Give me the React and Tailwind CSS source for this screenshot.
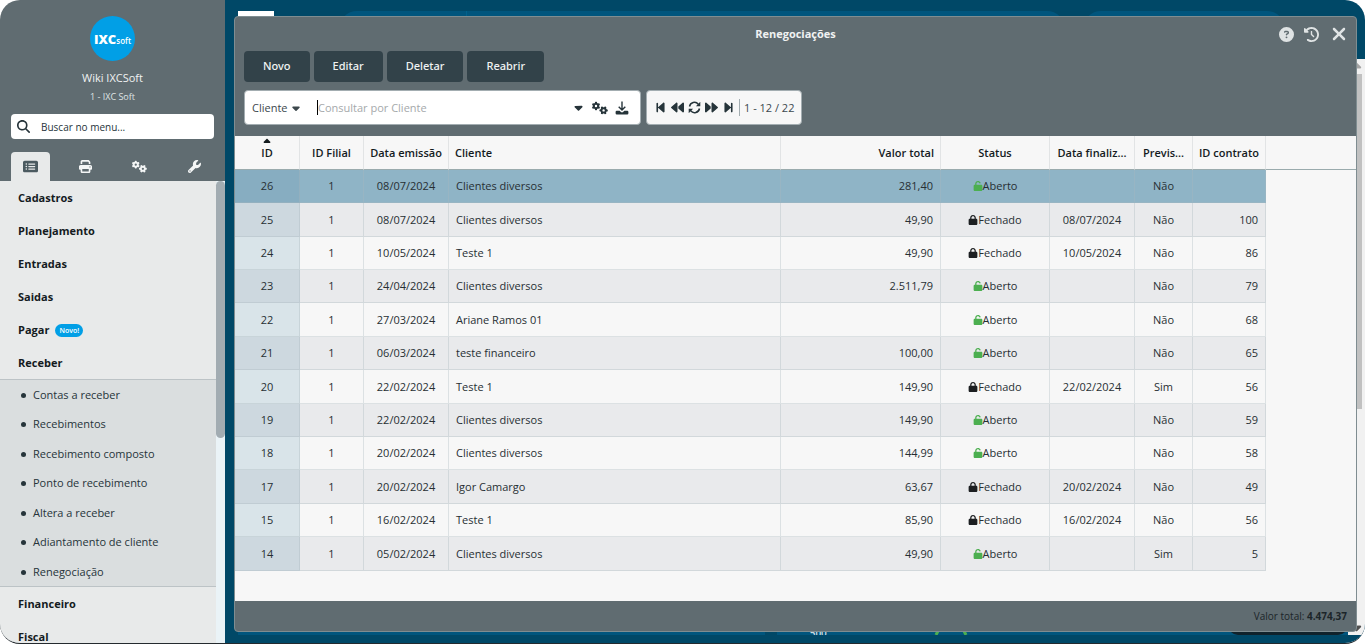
import React, { useState } from 'react';
import {
  FaMagnifyingGlass,
  FaRectangleList,
  FaPrint,
  FaGears,
  FaWrench,
  FaCaretDown,
  FaCaretUp,
  FaBackwardStep,
  FaBackward,
  FaForward,
  FaForwardStep,
  FaCircleQuestion,
  FaClockRotateLeft,
  FaXmark,
  FaLock,
  FaUnlock
} from 'react-icons/fa6';

const rows = [
  { id: 26, emissao: '08/07/2024', cliente: 'Clientes diversos', valor: '281,40', status: 'Aberto', final: '', previsao: 'Não', contrato: '' },
  { id: 25, emissao: '08/07/2024', cliente: 'Clientes diversos', valor: '49,90', status: 'Fechado', final: '08/07/2024', previsao: 'Não', contrato: '100' },
  { id: 24, emissao: '10/05/2024', cliente: 'Teste 1', valor: '49,90', status: 'Fechado', final: '10/05/2024', previsao: 'Não', contrato: '86' },
  { id: 23, emissao: '24/04/2024', cliente: 'Clientes diversos', valor: '2.511,79', status: 'Aberto', final: '', previsao: 'Não', contrato: '79' },
  { id: 22, emissao: '27/03/2024', cliente: 'Ariane Ramos 01', valor: '', status: 'Aberto', final: '', previsao: 'Não', contrato: '68' },
  { id: 21, emissao: '06/03/2024', cliente: 'teste financeiro', valor: '100,00', status: 'Aberto', final: '', previsao: 'Não', contrato: '65' },
  { id: 20, emissao: '22/02/2024', cliente: 'Teste 1', valor: '149,90', status: 'Fechado', final: '22/02/2024', previsao: 'Sim', contrato: '56' },
  { id: 19, emissao: '22/02/2024', cliente: 'Clientes diversos', valor: '149,90', status: 'Aberto', final: '', previsao: 'Não', contrato: '59' },
  { id: 18, emissao: '20/02/2024', cliente: 'Clientes diversos', valor: '144,99', status: 'Aberto', final: '', previsao: 'Não', contrato: '58' },
  { id: 17, emissao: '20/02/2024', cliente: 'Igor Camargo', valor: '63,67', status: 'Fechado', final: '20/02/2024', previsao: 'Não', contrato: '49' },
  { id: 15, emissao: '16/02/2024', cliente: 'Teste 1', valor: '85,90', status: 'Fechado', final: '16/02/2024', previsao: 'Não', contrato: '56' },
  { id: 14, emissao: '05/02/2024', cliente: 'Clientes diversos', valor: '49,90', status: 'Aberto', final: '', previsao: 'Sim', contrato: '5' }
];

const columns = [
  { key: 'id', label: 'ID', width: 'w-[65px]', align: 'text-center', sorted: true },
  { key: 'filial', label: 'ID Filial', width: 'w-[64px]', align: 'text-center' },
  { key: 'emissao', label: 'Data emissão', width: 'w-[85px]', align: 'text-center' },
  { key: 'cliente', label: 'Cliente', width: 'w-[332px]', align: 'text-left' },
  { key: 'valor', label: 'Valor total', width: 'w-[160px]', align: 'text-right' },
  { key: 'status', label: 'Status', width: 'w-[109px]', align: 'text-center' },
  { key: 'final', label: 'Data finaliz...', width: 'w-[85px]', align: 'text-center' },
  { key: 'previsao', label: 'Previs...', width: 'w-[58px]', align: 'text-center' },
  { key: 'contrato', label: 'ID contrato', width: 'w-[73px]', align: 'text-right' }
];

const receberItems = [
  'Contas a receber',
  'Recebimentos',
  'Recebimento composto',
  'Ponto de recebimento',
  'Altera a receber',
  'Adiantamento de cliente',
  'Renegociação'
];

const menu = [
  { name: 'Cadastros' },
  { name: 'Planejamento' },
  { name: 'Entradas' },
  { name: 'Saidas' },
  { name: 'Pagar', badge: 'Novo!' },
  { name: 'Receber', items: receberItems },
  { name: 'Financeiro' },
  { name: 'Fiscal' }
];

const RefreshIcon = () => (
  <svg viewBox="0 0 13 13" className="h-[13px] w-[13px]" fill="none" stroke="currentColor" strokeWidth="1.5">
    <path d="M1.500 5.500A5 5 0 0 1 10.300 3.200M11.500 7.500A5 5 0 0 1 2.700 9.800" />
    <path d="M12.300.8v4.400H7.900zM.7 12.200V7.800h4.400z" fill="currentColor" stroke="none" />
  </svg>
);

const DownloadIcon = () => (
  <svg viewBox="0 0 14 14" className="h-[14px] w-[14px]" fill="none" stroke="currentColor" strokeWidth="1.4">
    <path d="M7 .5v8.500M3.700 5.800L7 9.100l3.300-3.300" />
    <path
      d="M1.800 9.800h2.800l1.400 1.200a1.500 1.500 0 0 0 2 0l1.400-1.200h2.800A1.200 1.200 0 0 1 13.400 11v1.200a1.200 1.200 0 0 1-1.200 1.200H1.800A1.200 1.200 0 0 1 .6 12.200V11a1.200 1.200 0 0 1 1.200-1.200z"
      fill="currentColor"
      stroke="none"
    />
  </svg>
);

const tabs = [
  { name: 'Menu', icon: FaRectangleList },
  { name: 'Relatórios', icon: FaPrint },
  { name: 'Configurações', icon: FaGears },
  { name: 'Ferramentas', icon: FaWrench }
];

const pager = [
  { name: 'Primeira página', icon: FaBackwardStep },
  { name: 'Página anterior', icon: FaBackward },
  { name: 'Atualizar', icon: RefreshIcon },
  { name: 'Próxima página', icon: FaForward },
  { name: 'Última página', icon: FaForwardStep }
];

const Sidebar = () => {
  const [tab, setTab] = useState('Menu');

  return (
    <aside className="flex w-[225px] shrink-0 flex-col bg-[#606c71]">
      <div className="flex flex-col items-center pt-4">
        <div className="flex h-[45px] w-[45px] items-center justify-center rounded-full bg-[#019fe6] text-white">
          <span className="text-[13px] font-black leading-4">IXC</span>
          <span className="pt-1 text-[8px] font-semibold leading-3">soft</span>
        </div>
        <h1 className="mt-2 text-[11px] font-medium leading-[18px] text-[#f0f2f2]">Wiki IXCSoft</h1>
        <p className="mt-[2px] text-[9px] leading-4 text-[#dfe3e4]">1 - IXC Soft</p>
      </div>

      <label className="mx-[11px] mt-[9px] flex h-[25px] items-center rounded bg-white px-[6px] text-[#26343a]">
        <FaMagnifyingGlass size={13} />
        <input
          type="text"
          aria-label="Buscar no menu"
          placeholder="Buscar no menu..."
          className="ml-[11px] min-w-0 flex-1 pt-px text-[10px] outline-none placeholder:text-[#26343a]"
        />
      </label>

      <div className="mt-[13px] flex h-[29px] justify-between px-[11px]">
        {tabs.map((t) => (
          <button
            key={t.name}
            aria-label={t.name}
            onClick={() => setTab(t.name)}
            className={`flex w-[39px] items-center justify-center rounded-t-sm ${tab === t.name ? 'bg-[#e8eaea] text-[#4b5a60]' : 'text-[#f4f6f6]'}`}
          >
            <t.icon size={t.name === 'Ferramentas' || t.name === 'Relatórios' ? 13 : 15} />
          </button>
        ))}
      </div>

      <div className="flex min-h-0 flex-1 bg-[#e8eaea]">
        <nav className="min-w-0 flex-1 overflow-hidden text-[11px] text-[#141b1e]">
          {menu.map((m) => (
            <div key={m.name}>
              <a href="#" className="flex h-[33px] items-center gap-[6px] pl-[18px] pt-[2px] font-bold">
                {m.name}
                {m.badge && (
                  <span className="rounded-full bg-[#019fe6] px-1 text-[7px] font-semibold leading-[13px] text-white">{m.badge}</span>
                )}
              </a>
              {m.items && (
                <ul className="border-y border-[#bcc3c6] bg-[#dadedf] text-[#26343a]">
                  {m.items.map((item) => (
                    <li key={item} className="odd:h-[29px] even:h-[30px]">
                      <a href="#" className="flex h-full items-center gap-[7px] pl-[21px] pt-px">
                        <span className="h-[5px] w-[5px] rounded-full bg-[#26343a]" />
                        {item}
                      </a>
                    </li>
                  ))}
                </ul>
              )}
            </div>
          ))}
        </nav>
        <div className="w-[9px] bg-[#eaf3f7]">
          <div className="h-[257px] rounded-full bg-[#a2acb2]" />
        </div>
      </div>
    </aside>
  );
};

const Status = ({ value }) => (
  <span className="flex items-center justify-center">
    {value === 'Aberto' ? <FaUnlock size={10} className="text-[#4caf50]" /> : <FaLock size={10} className="text-[#1c1f21]" />}
    {value}
  </span>
);

const Grid = () => {
  const [selected, setSelected] = useState(26);

  return (
    <table className="w-full table-fixed border-separate border-spacing-0 text-[11px] leading-4 text-[#272f33]">
      <colgroup>
        {columns.map((c) => (
          <col key={c.key} className={c.width} />
        ))}
        <col />
      </colgroup>
      <thead>
        <tr className="h-[34px] text-[#141b1e]">
          {columns.map((c) => (
            <th key={c.key} className={`relative whitespace-nowrap border-b border-r border-b-[#9aabad] border-r-[#e2e4e5] px-[6px] font-semibold ${c.align}`}>
              {c.sorted && <FaCaretUp size={11} className="absolute left-1/2 top-0 -translate-x-1/2" />}
              {c.label}
            </th>
          ))}
          <th aria-hidden="true" className="border-b border-b-[#9aabad]" />
        </tr>
      </thead>
      <tbody>
        {rows.map((row) => (
          <tr key={row.id} onClick={() => setSelected(row.id)} className="group h-[33px] nth-[5n]:h-[34px] nth-[5n+2]:h-[34px]">
            {columns.map((c) => {
              const idBg = selected === row.id ? 'bg-[#87adc1]' : 'group-odd:bg-[#d9e4e9] group-even:bg-[#cdd8df]';
              const cellBg = selected === row.id ? 'bg-[#8fb4c6]' : 'group-even:bg-[#e9eaec]';
              return (
                <td
                  key={c.key}
                  className={`border-b border-r border-[#aab6bc]/35 px-[7px] ${c.align} ${c.key === 'id' ? idBg : cellBg}`}
                >
                  {c.key === 'status' ? <Status value={row.status} /> : c.key === 'filial' ? 1 : row[c.key]}
                </td>
              );
            })}
            <td />
          </tr>
        ))}
      </tbody>
    </table>
  );
};

const Renegociacoes = () => (
  <section
    role="dialog"
    aria-label="Renegociações"
    className="absolute bottom-[11px] left-[9px] right-2 top-4 flex flex-col overflow-hidden rounded border border-[#7f8d91] bg-[#606c71]"
  >
    <header className="relative flex h-[34px] shrink-0 items-center justify-center">
      <h2 className="text-[11px] font-bold text-[#f0f2f2]">Renegociações</h2>
      <div className="absolute right-[7px] flex items-center gap-[10px] text-[#dfe3e4]">
        <button aria-label="Ajuda"><FaCircleQuestion size={15} /></button>
        <button aria-label="Histórico"><FaClockRotateLeft size={15} /></button>
        <button aria-label="Fechar"><FaXmark size={20} /></button>
      </div>
    </header>

    <div className="flex shrink-0 gap-1 px-[9px] font-['Noto_Sans',sans-serif] text-[11px] font-medium text-[#f0f2f2]">
      <button className="h-[31px] rounded bg-[#324249] px-[19px]">Novo</button>
      <button className="h-[31px] rounded bg-[#324249] px-[19px]">Editar</button>
      <button className="h-[31px] rounded bg-[#324249] px-[19px]">Deletar</button>
      <button className="h-[31px] rounded bg-[#324249] px-[19px]">Reabrir</button>
    </div>

    <div className="mb-[11px] mt-2 flex shrink-0 gap-[5px] px-[9px] text-[11px] text-[#26343a]">
      <div className="flex h-[35px] w-[397px] items-center rounded-sm border border-[#a3adb1] bg-white pl-[7px] pr-[11px]">
        <div className="relative flex items-center">
          <select aria-label="Campo" className="w-[50px] appearance-none pt-px font-medium text-[#3c484d] outline-none">
            <option>Cliente</option>
            <option>ID</option>
          </select>
          <FaCaretDown size={12} className="pointer-events-none absolute right-0 text-[#3c484d]" />
        </div>
        <span className="ml-[15px] h-[15px] w-px bg-black" />
        <input
          type="text"
          aria-label="Consultar por Cliente"
          placeholder="Consultar por Cliente"
          className="min-w-0 flex-1 pt-px outline-none placeholder:text-[#a5a9ab]"
        />
        <div className="flex items-center gap-[7px]">
          <button aria-label="Opções de busca"><FaCaretDown size={13} /></button>
          <button aria-label="Configurar"><FaGears size={16} /></button>
          <button aria-label="Exportar"><DownloadIcon /></button>
        </div>
      </div>
      <div className="flex h-[35px] items-center rounded-sm border border-[#a3adb1] bg-[#f7f7f7] px-[7px]">
        <div className="flex items-center gap-1">
          {pager.map((p) => (
            <button key={p.name} aria-label={p.name}>
              <p.icon size={13} />
            </button>
          ))}
        </div>
        <span className="ml-1 border-l border-[#a3adb1] pl-1 pt-px text-[#3c484d]">1 - 12 / 22</span>
      </div>
    </div>

    <div className="min-h-0 flex-1 overflow-hidden bg-[#f7f7f7]">
      <Grid />
    </div>

    <footer className="flex h-[30px] shrink-0 items-center justify-end px-[9px] text-[10px] text-[#1c2529]">
      <p>Valor total: <strong>4.474,37</strong></p>
    </footer>
  </section>
);

// Dashboard that stays behind the open window
const Backdrop = () => (
  <div className="flex h-full flex-col bg-[#004867]">
    <div className="flex h-[59px] items-start pl-[13px] pr-20 pt-[11px]">
      <div className="h-9 w-9 bg-white" />
      <div className="ml-[65px] flex h-9 flex-[730] rounded-full bg-[#00557d]">
        <div className="w-[128px] border-r border-[#00618c]" />
      </div>
      <div className="ml-[18px] h-9 flex-[203] rounded-full bg-[#00557d]" />
    </div>
    <div className="mb-2 ml-[13px] flex min-h-0 flex-1">
      <div className="flex flex-1 gap-3">
        <div className="flex-[543] bg-[#00557d]" />
        <div className="flex flex-[555] items-end justify-between overflow-hidden bg-[#00557d] pl-[33px]">
          <div className="flex h-3 items-start">
            <span className="text-[10px] font-semibold leading-5 text-[#cfdfe6]">500</span>
            <svg viewBox="0 0 40 12" className="ml-[107px] h-3 w-10" fill="none" stroke="#4caf50" strokeWidth="3">
              <path d="M2 12L8 0M26 0l6 12" />
            </svg>
          </div>
          <div className="h-5 w-[120px] rounded-full bg-[#10222b]" />
        </div>
      </div>
      <div className="flex w-[17px] flex-col items-center bg-[#f1f1f1]">
        <FaCaretUp size={15} className="shrink-0 text-[#a3a3a3]" />
        <div className="mr-[2px] h-[335px] w-[13px] bg-[#c1c1c1]" />
        <FaCaretDown size={15} className="mt-auto shrink-0 text-[#505050]" />
      </div>
    </div>
  </div>
);

const App = () => (
  <div className="h-screen bg-white font-['Open_Sans','Noto_Sans',sans-serif]">
    <div className="flex h-full overflow-hidden rounded-[20px] border-b border-[#242a2e]">
      <Sidebar />
      <main className="relative min-w-0 flex-1">
        <Backdrop />
        <Renegociacoes />
      </main>
    </div>
  </div>
);

export default App;
